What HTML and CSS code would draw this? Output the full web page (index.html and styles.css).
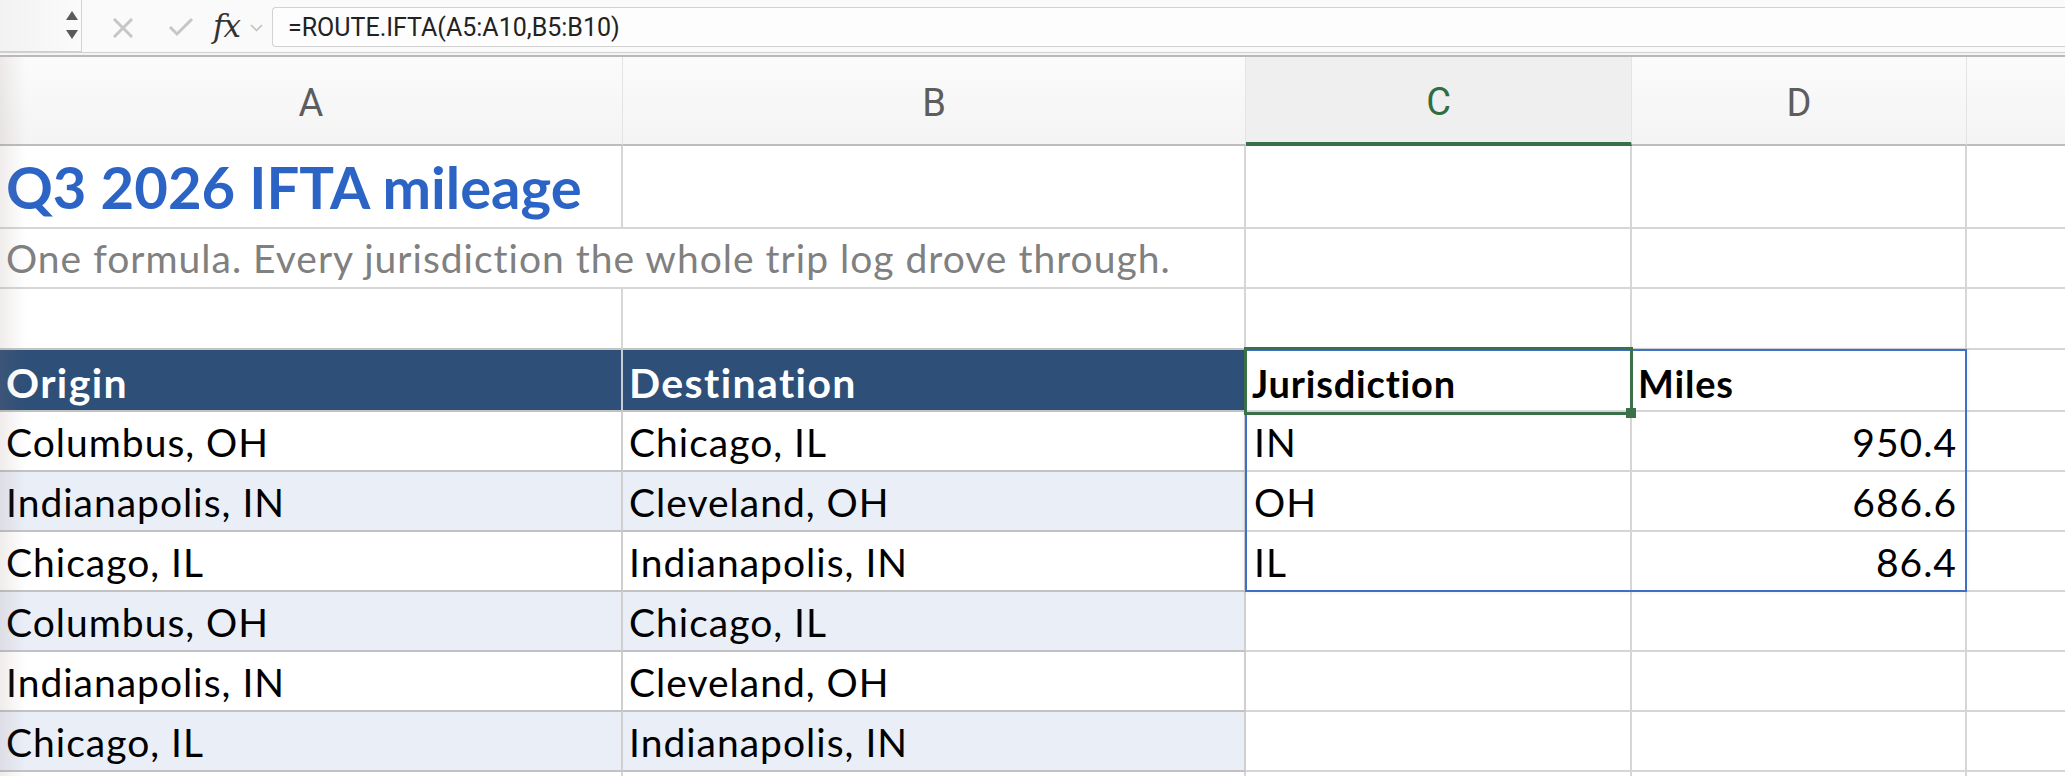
FILE: index.html
```html
<!DOCTYPE html>
<html lang="en">
<head>
    <meta charset="UTF-8">
    <meta name="viewport" content="width=device-width, initial-scale=1.0">
    <title>Q3 2026 IFTA mileage</title>
    <link rel="stylesheet" href="styles.css">
</head>
<body>
    <!-- formula bar -->
    <div class="formula-bar">
        <div class="name-box">
            <svg class="spinner" width="14" height="34" viewBox="0 0 14 34">
                <path d="M7 3 L13 12 L1 12 Z" fill="#5a5a5a"/>
                <path d="M1 22 L13 22 L7 31 Z" fill="#5a5a5a"/>
            </svg>
        </div>
        <div class="bar-tools">
            <svg class="icon-cancel" width="20" height="20" viewBox="0 0 20 20">
                <path d="M2 2 L18 18 M18 2 L2 18" stroke="#c6c6c6" stroke-width="3" stroke-linecap="square"/>
            </svg>
            <svg class="icon-enter" width="26" height="20" viewBox="0 0 26 20">
                <path d="M2 10 L9 17 L24 2" stroke="#c6c6c6" stroke-width="3" fill="none"/>
            </svg>
            <span class="fx">fx</span>
            <svg class="icon-chevron" width="13" height="8" viewBox="0 0 13 8">
                <path d="M1 1 L6.5 6.5 L12 1" stroke="#bdbdbd" stroke-width="1.5" fill="none"/>
            </svg>
        </div>
        <div class="formula-input">=ROUTE.IFTA(A5:A10,B5:B10)</div>
    </div>
    <div class="bar-rule"></div>

    <!-- worksheet -->
    <div class="sheet">
        <div class="col-head">A</div>
        <div class="col-head">B</div>
        <div class="col-head active">C</div>
        <div class="col-head">D</div>
        <div class="col-head">E</div>

        <div class="cell title">Q3 2026 IFTA mileage</div>
        <div class="cell"></div>
        <div class="cell"></div>
        <div class="cell"></div>
        <div class="cell"></div>

        <div class="cell subtitle">One formula. Every jurisdiction the whole trip log drove through.</div>
        <div class="cell"></div>
        <div class="cell"></div>
        <div class="cell"></div>

        <div class="cell above-table"></div>
        <div class="cell above-table"></div>
        <div class="cell"></div>
        <div class="cell"></div>
        <div class="cell"></div>

        <div class="cell th">Origin</div>
        <div class="cell th">Destination</div>
        <div class="cell bold">Jurisdiction</div>
        <div class="cell bold">Miles</div>
        <div class="cell"></div>

        <div class="cell td">Columbus, OH</div>
        <div class="cell td">Chicago, IL</div>
        <div class="cell">IN</div>
        <div class="cell num">950.4</div>
        <div class="cell"></div>

        <div class="cell td band">Indianapolis, IN</div>
        <div class="cell td band">Cleveland, OH</div>
        <div class="cell">OH</div>
        <div class="cell num">686.6</div>
        <div class="cell"></div>

        <div class="cell td">Chicago, IL</div>
        <div class="cell td">Indianapolis, IN</div>
        <div class="cell">IL</div>
        <div class="cell num">86.4</div>
        <div class="cell"></div>

        <div class="cell td band">Columbus, OH</div>
        <div class="cell td band">Chicago, IL</div>
        <div class="cell"></div>
        <div class="cell"></div>
        <div class="cell"></div>

        <div class="cell td">Indianapolis, IN</div>
        <div class="cell td">Cleveland, OH</div>
        <div class="cell"></div>
        <div class="cell"></div>
        <div class="cell"></div>

        <div class="cell td band">Chicago, IL</div>
        <div class="cell td band">Indianapolis, IN</div>
        <div class="cell"></div>
        <div class="cell"></div>
        <div class="cell"></div>

        <div class="cell"></div>
        <div class="cell"></div>
        <div class="cell"></div>
        <div class="cell"></div>
        <div class="cell"></div>

        <!-- selection C4:D7 and active cell C4, laid over the grid -->
        <div class="range"></div>
        <div class="active-cell"><span class="fill-handle"></span></div>
        <div class="edge-shade"></div>
    </div>
</body>
</html>
```
FILE: styles.css
```css
body {
    margin: 0;
    width: 2065px;
    height: 776px;
    overflow: hidden;
    background: #ffffff;
    font-family: 'Lato', 'Open Sans', sans-serif;
    color: #000;
}

/* ---- formula bar ---- */
.formula-bar {
    display: flex;
    height: 52px;
    background: #fafafa;
}

.name-box {
    width: 79px;
    height: 51px;
    border-right: 1px solid #d3d3d3;
    border-bottom: 1px solid #cfcfcf;
    background: linear-gradient(to right, #f2f2f2, #fbfbfb);
    display: flex;
    align-items: center;
    justify-content: flex-end;
    padding-right: 2px;
    box-sizing: content-box;
}

.spinner {
    display: block;
    margin-top: -2px;
}

.bar-tools {
    display: flex;
    align-items: center;
    padding-left: 31px;
}

.icon-cancel {
    margin-top: 4px;
}

.icon-enter {
    margin-left: 35px;
    margin-top: 2px;
}

.fx {
    margin-left: 19px;
    font-family: 'DejaVu Serif', 'Liberation Serif', serif;
    font-style: italic;
    font-size: 31px;
    color: #333;
    letter-spacing: -1px;
}

.icon-chevron {
    margin-left: 10px;
    margin-top: 4px;
}

.formula-input {
    flex: 1;
    margin: 7px 0 5px 9px;
    padding-left: 15px;
    border: 1px solid #d2d2d2;
    border-right: none;
    border-radius: 4px 0 0 4px;
    background: #fdfdfd;
    display: flex;
    align-items: center;
    font-family: 'Roboto', sans-serif;
    font-size: 25px;
    color: #222;
}

.bar-rule {
    height: 2px;
    border-top: 1px solid #d0d0d0;
    border-bottom: 2px solid #b9b9b9;
    background: #f4f4f4;
}

/* ---- worksheet grid ---- */
.sheet {
    position: relative;
    width: 2065px;
    overflow: hidden;
    display: grid;
    grid-template-columns: 623px 623px 386px 335px 214px;
    grid-template-rows: 89px 83px 60px 61px 62px repeat(7, 60px);
}

.col-head {
    display: flex;
    align-items: center;
    justify-content: center;
    padding-top: 4px;
    background: linear-gradient(#fbfbfb, #f4f4f4);
    border-right: 1px solid #e4e4e4;
    border-bottom: 2px solid #bdbdbd;
    font-family: 'Roboto', sans-serif;
    font-size: 38px;
    color: #5d5d5d;
}

.col-head.active {
    background: #efefef;
    color: #2f6e41;
    border-bottom: 4px solid #37704a;
}

.cell {
    display: flex;
    align-items: flex-end;
    padding: 0 8px 8px 8px;
    border-right: 2px solid #d6d6d6;
    border-bottom: 2px solid #d6d6d6;
    font-size: 39px;
    letter-spacing: 1px;
    line-height: 1;
    white-space: nowrap;
    min-width: 0;
}

.title {
    padding-left: 6px;
    padding-bottom: 11px;
    font-size: 58px;
    font-weight: 700;
    letter-spacing: 0;
    color: #2c64c6;
}

.subtitle {
    grid-column: span 2;
    padding-left: 6px;
    padding-bottom: 9px;
    color: #808080;
}

.above-table {
    border-bottom-color: #c4c4c4;
}

.th {
    background: #2e4f77;
    color: #ffffff;
    font-weight: 700;
    font-size: 41px;
    letter-spacing: 1.4px;
    padding-left: 6px;
    padding-bottom: 7px;
    border-right-color: #c9ced6;
    border-bottom-color: #c2c2c2;
}

.td {
    padding-left: 6px;
    border-right-color: #cfcfcf;
    border-bottom-color: #c2c2c2;
}

.band {
    background: #e9eef7;
}

.bold {
    font-weight: 700;
    font-size: 38px;
    letter-spacing: 0.8px;
    padding-left: 6px;
}

.num {
    justify-content: flex-end;
}

/* selection overlays: absolutely placed inside their grid areas */
.range {
    position: absolute;
    grid-column: 3 / 5;
    grid-row: 5 / 9;
    top: -1px;
    left: -1px;
    right: 0;
    bottom: 0;
    border: 2px solid #416fc4;
    box-shadow: 0 0 5px rgba(0, 0, 0, 0.08);
    pointer-events: none;
}

.active-cell {
    position: absolute;
    grid-column: 3 / 4;
    grid-row: 5 / 6;
    top: -3px;
    left: -2px;
    right: -1px;
    bottom: -3px;
    border: 3px solid #3a7148;
    pointer-events: none;
}

.fill-handle {
    position: absolute;
    right: -6px;
    bottom: -6px;
    width: 10px;
    height: 10px;
    background: #3a7148;
}

.edge-shade {
    position: absolute;
    grid-column: 1 / 2;
    grid-row: 1 / -1;
    top: 0;
    bottom: 0;
    left: 0;
    width: 26px;
    background: linear-gradient(to right, rgba(150, 120, 120, 0.14), rgba(150, 120, 120, 0));
    pointer-events: none;
}
```
